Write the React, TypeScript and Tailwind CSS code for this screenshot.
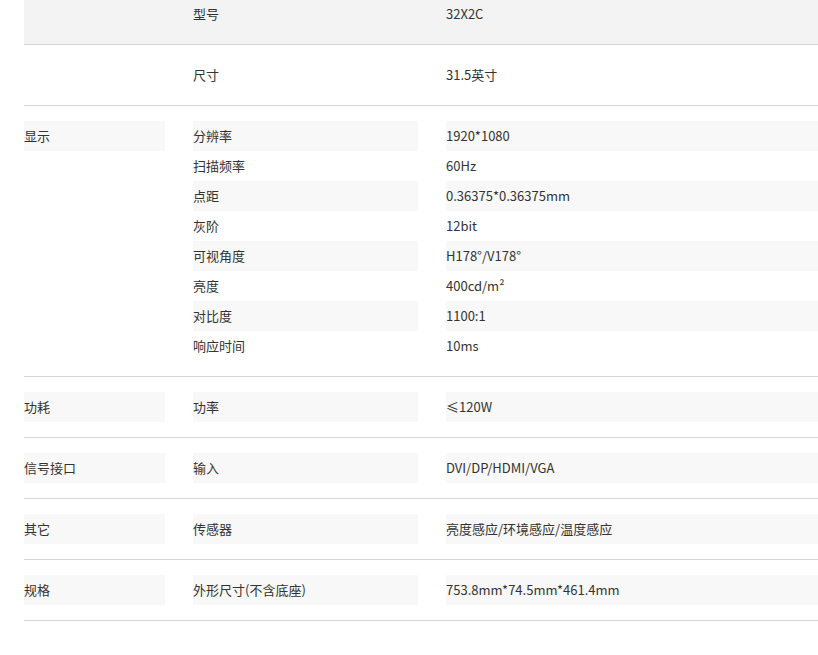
const sections: { cat: string; rows: [string, string][]; bg?: string; stripe?: boolean }[] = [
  { cat: "", rows: [["型号", "32X2C"]], bg: "bg-[#f3f3f3]" },
  { cat: "", rows: [["尺寸", "31.5英寸"]] },
  {
    cat: "显示",
    stripe: true,
    rows: [
      ["分辨率", "1920*1080"],
      ["扫描频率", "60Hz"],
      ["点距", "0.36375*0.36375mm"],
      ["灰阶", "12bit"],
      ["可视角度", "H178°/V178°"],
      ["亮度", "400cd/m²"],
      ["对比度", "1100:1"],
      ["响应时间", "10ms"],
    ],
  },
  { cat: "功耗", stripe: true, rows: [["功率", "≤120W"]] },
  { cat: "信号接口", stripe: true, rows: [["输入", "DVI/DP/HDMI/VGA"]] },
  { cat: "其它", stripe: true, rows: [["传感器", "亮度感应/环境感应/温度感应"]] },
  { cat: "规格", stripe: true, rows: [["外形尺寸(不含底座)", "753.8mm*74.5mm*461.4mm"]] },
];

export default function App() {
  return (
    <div
      className="w-[818px] h-[655px] overflow-hidden bg-white pl-[24px] text-[13px] text-[#333]"
      style={{ fontFamily: '"Microsoft YaHei", "Noto Sans CJK SC", sans-serif' }}
    >
      {sections.map((s, si) => (
        <div
          key={si}
          className={`py-[15px] border-b border-[#d6d6d6] ${s.bg ?? ""} ${si === 0 ? "-mt-[16px]" : ""}`}
        >
          {s.rows.map(([n, v], ri) => {
            const striped = s.stripe && ri % 2 === 0;
            const cell = striped ? "bg-[#f8f8f8]" : "";
            return (
              <div key={ri} className="flex h-[30px] gap-[28px]">
                <div className={`w-[141px] flex items-center ${ri === 0 ? cell : ""}`}>
                  {ri === 0 ? s.cat : ""}
                </div>
                <div className={`w-[225px] flex items-center ${cell}`}>{n}</div>
                <div className={`flex-1 flex items-center ${cell}`}>{v}</div>
              </div>
            );
          })}
        </div>
      ))}
    </div>
  );
}
